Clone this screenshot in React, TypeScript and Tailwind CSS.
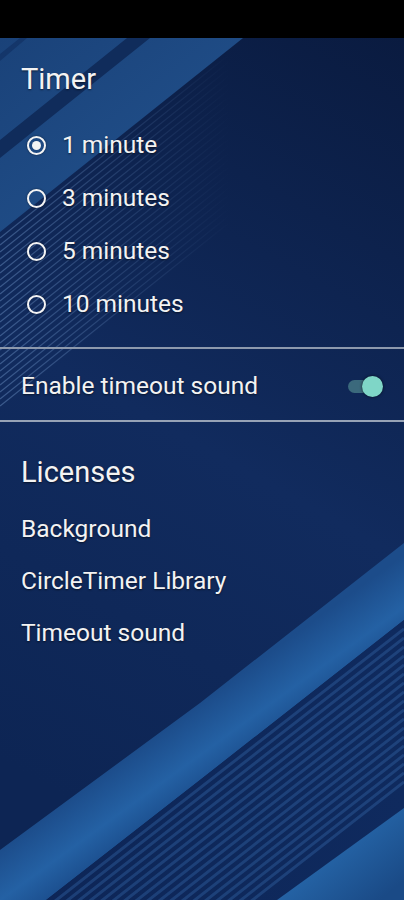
import React from "react";

function Background() {
  const topStripes: number[] = [];
  for (let c = 238; c <= 410; c += 7) topStripes.push(c);
  const bottomStripes: number[] = [];
  for (let c = 944; c <= 1100; c += 9) bottomStripes.push(c);
  return (
    <svg
      className="absolute inset-0 w-full h-full"
      viewBox="0 38 404 862"
      preserveAspectRatio="none"
    >
      <defs>
        <linearGradient id="base" x1="404" y1="38" x2="0" y2="760" gradientUnits="userSpaceOnUse">
          <stop offset="0" stopColor="#0a1b40" />
          <stop offset="0.55" stopColor="#112b5e" />
          <stop offset="1" stopColor="#0d2554" />
        </linearGradient>
        <linearGradient id="tl" x1="0" y1="38" x2="150" y2="225" gradientUnits="userSpaceOnUse">
          <stop offset="0" stopColor="#1a4279" />
          <stop offset="1" stopColor="#21508b" />
        </linearGradient>
        <linearGradient id="tlStripe" x1="0" y1="0" x2="230" y2="0" gradientUnits="userSpaceOnUse">
          <stop offset="0" stopColor="#6f95c8" stopOpacity="0.45" />
          <stop offset="1" stopColor="#6f95c8" stopOpacity="0" />
        </linearGradient>
        <linearGradient id="band" x1="200" y1="703" x2="245" y2="765" gradientUnits="userSpaceOnUse">
          <stop offset="0" stopColor="#1c4c8a" />
          <stop offset="0.55" stopColor="#2461a4" />
          <stop offset="1" stopColor="#1a4b8a" />
        </linearGradient>
        <linearGradient id="br" x1="340" y1="850" x2="380" y2="900" gradientUnits="userSpaceOnUse">
          <stop offset="0" stopColor="#2462a4" />
          <stop offset="1" stopColor="#1a4a86" />
        </linearGradient>
        <linearGradient id="stripeFill" x1="0" y1="0" x2="404" y2="0" gradientUnits="userSpaceOnUse">
          <stop offset="0" stopColor="#0d2556" />
          <stop offset="1" stopColor="#0f2a5e" />
        </linearGradient>
      </defs>
      <rect x="0" y="38" width="404" height="862" fill="url(#base)" />
      {/* top-left light area */}
      <polygon points="0,38 243,38 0,232" fill="url(#tl)" />
      <polygon points="0,140 127,38 150,38 0,158" fill="#102c5b" />
      <polygon points="0,54 20,38 27,38 0,61" fill="#14366a" />
      {topStripes.map((c) => (
        <line
          key={c}
          x1={0}
          y1={c}
          x2={(c - 38) / 0.8}
          y2={38}
          stroke="url(#tlStripe)"
          strokeWidth="1.2"
        />
      ))}
      {/* bottom band */}
      <polygon points="0,850 200,703 404,543 404,620 200,780 0,936" fill="url(#band)" />
      <polygon points="0,936 200,780 404,620 404,808 277,900 0,900" fill="url(#stripeFill)" />
      {bottomStripes.map((c) => (
        <line
          key={c}
          x1={0}
          y1={c}
          x2={404}
          y2={c - 0.78 * 404}
          stroke="#3467a8"
          strokeOpacity="0.4"
          strokeWidth="3"
        />
      ))}
      <polygon points="277,900 404,808 404,900" fill="url(#br)" />
    </svg>
  );
}

function Radio({ checked }: { checked?: boolean }) {
  return (
    <div className="w-[19px] h-[19px] rounded-full border-[2.5px] border-[#f4f4f4] flex items-center justify-center shadow-[0_0_2px_rgba(0,0,0,0.6)]">
      {checked && <div className="w-[9px] h-[9px] rounded-full bg-[#f4f4f4]" />}
    </div>
  );
}

export default function App() {
  const options = [
    { label: "1 minute", checked: true },
    { label: "3 minutes" },
    { label: "5 minutes" },
    { label: "10 minutes" },
  ];
  const licenses = ["Background", "CircleTimer Library", "Timeout sound"];
  return (
    <div className="w-[404px] h-[900px] bg-black flex flex-col font-[family-name:Roboto,sans-serif] text-[#f3f3f3] [text-shadow:0_1px_2px_rgba(0,0,0,0.55)] overflow-hidden">
      <div className="h-[38px] bg-black shrink-0" />
      <div className="relative flex-1">
        <Background />
        <div className="relative flex flex-col">
          <div className="pt-[22px] h-[62px] pl-[21px] flex items-end">
            <div className="h-[40px] flex items-center text-[29px]">Timer</div>
          </div>
          <div className="mt-[19px] flex flex-col">
            {options.map((o) => (
              <div key={o.label} className="h-[53px] flex items-center pl-[27px] gap-[16px]">
                <Radio checked={o.checked} />
                <span className="text-[24.5px] leading-none">{o.label}</span>
              </div>
            ))}
          </div>
          <div className="mt-[16px] h-[2px] bg-[#8d99ad]" />
          <div className="h-[71px] pt-[4px] flex items-center justify-between pl-[21px] pr-[21px]">
            <span className="text-[24.5px] leading-none">Enable timeout sound</span>
            <div className="relative w-[35px] h-[21px]">
              <div className="absolute left-0 top-[4px] w-[31px] h-[13px] rounded-full bg-[#467a86] opacity-80" />
              <div className="absolute right-0 top-0 w-[21px] h-[21px] rounded-full bg-[#7fd6c7] shadow-[0_0_3px_rgba(0,0,0,0.7)]" />
            </div>
          </div>
          <div className="h-[2px] bg-[#97a3b6]" />
          <div className="pt-[31px] pl-[21px]">
            <div className="h-[40px] flex items-center text-[29px]">Licenses</div>
          </div>
          <div className="mt-[10px] flex flex-col">
            {licenses.map((l) => (
              <div key={l} className="h-[52px] flex items-center pl-[21px] text-[24.5px] leading-none">
                {l}
              </div>
            ))}
          </div>
        </div>
      </div>
    </div>
  );
}
